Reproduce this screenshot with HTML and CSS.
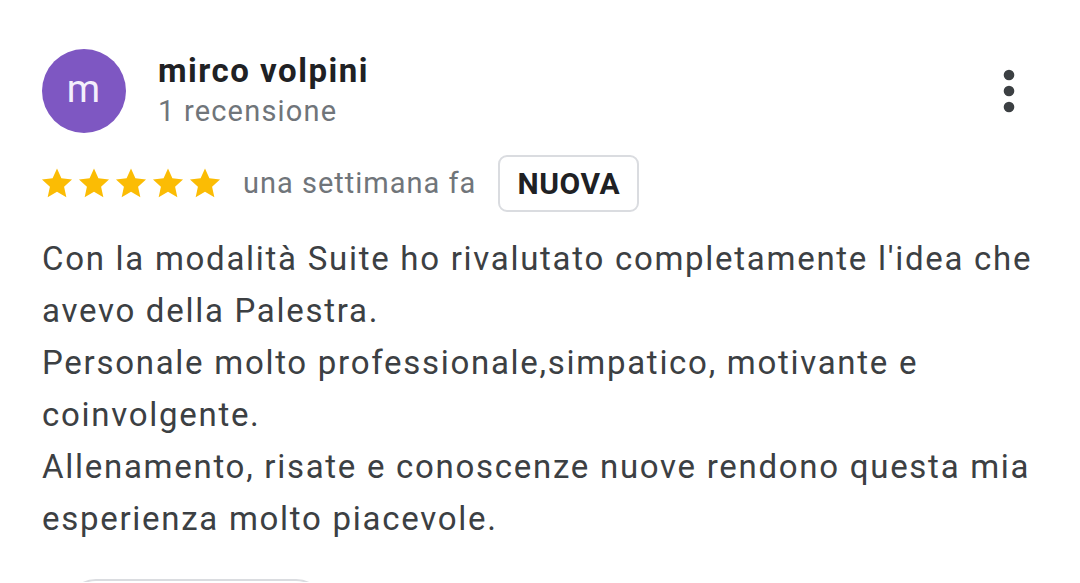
FILE: index.html
```html
<!DOCTYPE html>
<html lang="it">
<head>
<meta charset="utf-8">
<link rel="stylesheet" href="styles.css">
</head>
<body>
<div class="review">
  <div class="header">
    <div class="avatar">m</div>
    <div class="who">
      <div class="name">mirco volpini</div>
      <div class="count">1 recensione</div>
    </div>
    <div class="more">
      <svg width="12" height="44" viewBox="0 0 12 44"><circle cx="6" cy="6" r="5.3" fill="#3c4043"/><circle cx="6" cy="22" r="5.3" fill="#3c4043"/><circle cx="6" cy="38" r="5.3" fill="#3c4043"/></svg>
    </div>
  </div>
  <div class="meta">
    <div class="stars">
      <svg class="star" viewBox="0 0 24 24"><path d="M12 1.8l3.1 6.9 7.5.8-5.6 5.1 1.6 7.4L12 18.2 5.4 22l1.6-7.4-5.6-5.1 7.5-.8z" fill="#fbbc04"/></svg>
      <svg class="star" viewBox="0 0 24 24"><path d="M12 1.8l3.1 6.9 7.5.8-5.6 5.1 1.6 7.4L12 18.2 5.4 22l1.6-7.4-5.6-5.1 7.5-.8z" fill="#fbbc04"/></svg>
      <svg class="star" viewBox="0 0 24 24"><path d="M12 1.8l3.1 6.9 7.5.8-5.6 5.1 1.6 7.4L12 18.2 5.4 22l1.6-7.4-5.6-5.1 7.5-.8z" fill="#fbbc04"/></svg>
      <svg class="star" viewBox="0 0 24 24"><path d="M12 1.8l3.1 6.9 7.5.8-5.6 5.1 1.6 7.4L12 18.2 5.4 22l1.6-7.4-5.6-5.1 7.5-.8z" fill="#fbbc04"/></svg>
      <svg class="star" viewBox="0 0 24 24"><path d="M12 1.8l3.1 6.9 7.5.8-5.6 5.1 1.6 7.4L12 18.2 5.4 22l1.6-7.4-5.6-5.1 7.5-.8z" fill="#fbbc04"/></svg>
    </div>
    <span class="when">una settimana fa</span>
    <span class="chip">NUOVA</span>
  </div>
  <p class="text">Con la modalità Suite ho rivalutato completamente l'idea che avevo della Palestra.<br>Personale molto professionale,simpatico, motivante e coinvolgente.<br>Allenamento, risate e conoscenze nuove rendono questa mia esperienza molto piacevole.</p>
  <div class="actions"><span class="btn"></span></div>
</div>
</body>
</html>
```
FILE: styles.css
```css
html, body {
  margin: 0;
  padding: 0;
  background: #ffffff;
  overflow: hidden;
}
body {
  font-family: Roboto, "Noto Sans", Arial, sans-serif;
  width: 1080px;
  height: 583px;
}
.review {
  padding: 49px 0 0 42px;
}
.header {
  display: flex;
  align-items: flex-start;
}
.avatar {
  width: 84px;
  height: 84px;
  border-radius: 50%;
  background: #7e57c2;
  color: #f3eefc;
  font-size: 38px;
  letter-spacing: 1px;
  line-height: 80px;
  text-align: center;
  flex: none;
}
.who {
  margin-left: 32px;
}
.name {
  font-size: 33px;
  font-weight: 700;
  color: #202124;
  line-height: 44px;
  letter-spacing: 1.5px;
}
.count {
  font-size: 29px;
  color: #70757a;
  line-height: 36px;
  letter-spacing: 1.2px;
}
.more {
  margin-left: auto;
  margin-right: 65px;
  margin-top: 20px;
}
.more svg { display: block; }
.meta {
  display: flex;
  align-items: center;
  margin-top: 21px;
  height: 58px;
}
.stars {
  display: flex;
  gap: 3px;
  margin-left: -2px;
}
.star {
  width: 34px;
  height: 34px;
  display: block;
}
.when {
  font-size: 29px;
  color: #70757a;
  margin-left: 21px;
  letter-spacing: 1px;
}
.chip {
  margin-left: 22px;
  height: 57px;
  box-sizing: border-box;
  border: 2px solid #dadce0;
  border-radius: 9px;
  padding: 0 17px;
  display: flex;
  align-items: center;
  font-size: 30px;
  font-weight: 700;
  letter-spacing: 0.6px;
  color: #202124;
}
.text {
  margin: 21px 0 0 0;
  width: 1010px;
  font-size: 33px;
  line-height: 52px;
  letter-spacing: 1.72px;
  color: #3c4043;
}
.actions {
  margin-top: 34px;
  padding-left: 24px;
  height: 3px;
  overflow: hidden;
}
.btn {
  display: block;
  width: 256px;
  height: 60px;
  border: 2px solid #dadce0;
  border-radius: 30px;
}
```
